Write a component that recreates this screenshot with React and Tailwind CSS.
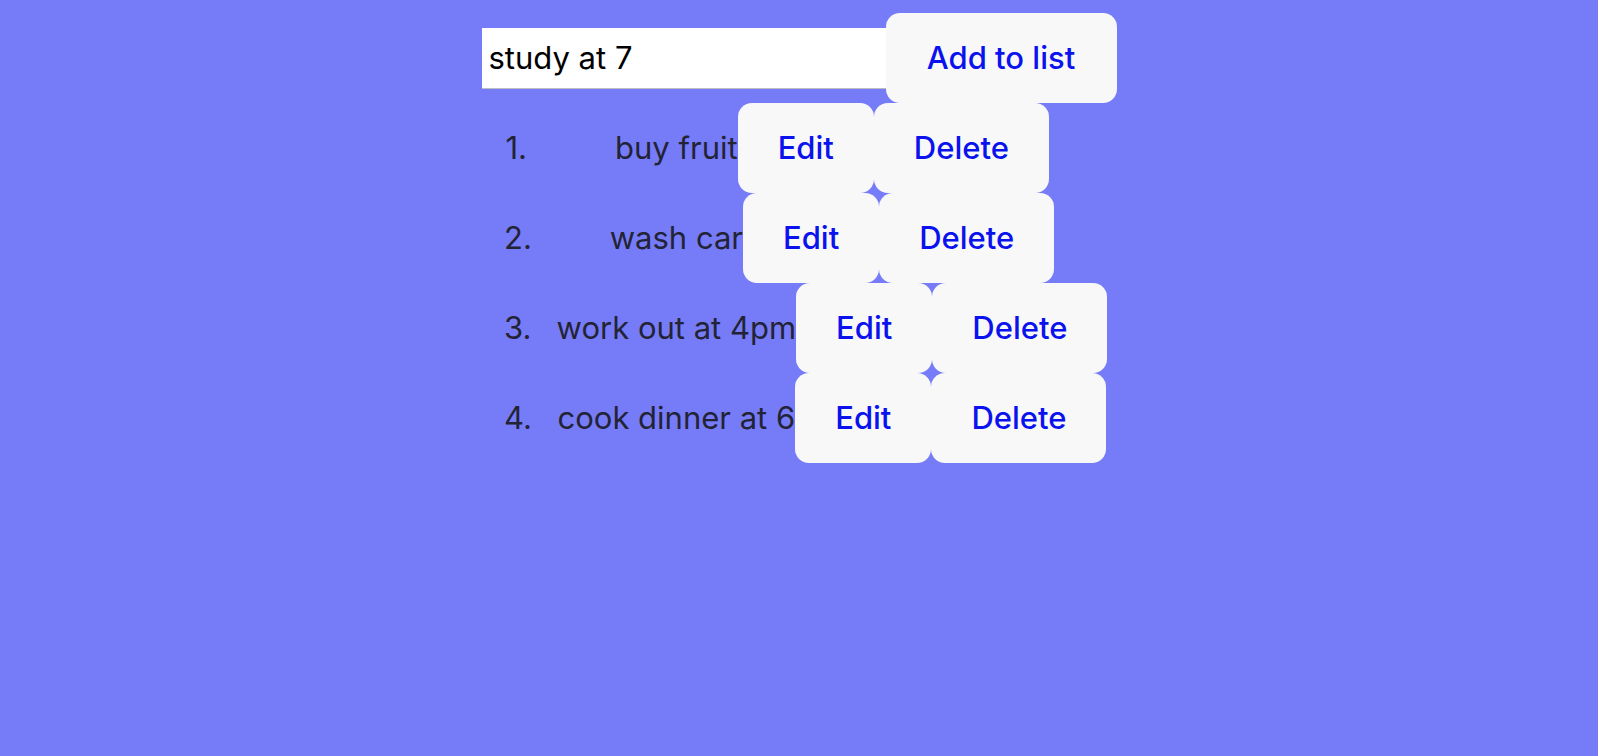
import React, { useState } from 'react';

const FONT = "font-['Inter','Helvetica_Neue','Liberation_Sans',sans-serif]";

const ActionButton = ({ children, onClick }) => (
  <button
    type="button"
    onClick={onClick}
    className="h-[90px] shrink-0 rounded-[14px] bg-[#f8f8f8] px-[40px] text-[31px] font-medium text-[#0a12ee]"
  >
    {children}
  </button>
);

export default function App() {
  const [draft, setDraft] = useState('study at 7');
  const [items, setItems] = useState(['buy fruit', 'wash car', 'work out at 4pm', 'cook dinner at 6']);

  const addItem = () => {
    if (!draft.trim()) return;
    setItems([...items, draft.trim()]);
    setDraft('');
  };

  const editItem = (index) => {
    const next = window.prompt('Edit item', items[index]);
    if (next == null) return;
    setItems(items.map((it, i) => (i === index ? next : it)));
  };

  const deleteItem = (index) => setItems(items.filter((_, i) => i !== index));

  return (
    <div className={`min-h-screen bg-[#767cf7] pt-[13px] ${FONT}`}>
      <div className="flex items-center justify-center">
        <input
          value={draft}
          onChange={(e) => setDraft(e.target.value)}
          className="h-[61px] w-[404px] border-b border-[#bdbdbd] bg-white px-[7px] text-[31px] text-black outline-none"
        />
        <button
          type="button"
          onClick={addItem}
          className="h-[90px] w-[231px] rounded-[14px] bg-[#f8f8f8] text-[31px] font-medium text-[#0a12ee]"
        >
          Add to list
        </button>
      </div>

      <div className="flex justify-center">
        <ol className="ml-[14px] w-[604px]">
          {items.map((item, i) => (
            <li key={i} className="flex h-[90px] items-center">
              <span className="w-[52px] shrink-0 pr-[29px] text-right text-[31px] text-[#232336]">{i + 1}.</span>
              <div className="flex w-[552px] items-center justify-center">
                <span className="whitespace-nowrap text-[31px] text-[#232336]">{item}</span>
                <ActionButton onClick={() => editItem(i)}>Edit</ActionButton>
                <ActionButton onClick={() => deleteItem(i)}>Delete</ActionButton>
              </div>
            </li>
          ))}
        </ol>
      </div>
    </div>
  );
}
